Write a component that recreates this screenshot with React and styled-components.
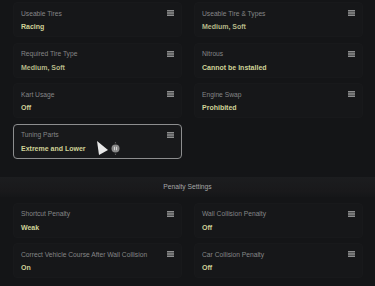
import React from "react";
import styled, { createGlobalStyle } from "styled-components";

const Global = createGlobalStyle`
  html, body { margin: 0; padding: 0; background: #141517; }
  body { font-family: "Liberation Sans", Arial, sans-serif; }
`;

const Page = styled.div`
  width: 375px;
  height: 286px;
  overflow: hidden;
  background: #141517;
  position: relative;
`;

const Grid = styled.div`
  display: grid;
  grid-template-columns: 169px 169px;
  column-gap: 12px;
  row-gap: 5.5px;
  padding: ${(p) => p.$pad};
`;

const Card = styled.div`
  position: relative;
  box-sizing: border-box;
  height: 35px;
  padding: 6px 7px 0 7px;
  border-radius: 4px;
  background: ${(p) => (p.$active ? "#18191b" : "#161719")};
  border: ${(p) => (p.$active ? "1.5px solid #8d8e8f" : "1px solid #18191b")};
  display: flex;
  flex-direction: column;
  gap: 5px;
`;

const Head = styled.div`
  display: flex;
  justify-content: space-between;
  align-items: center;
  height: 8px;
`;

const Label = styled.span`
  font-size: 6.7px;
  color: #858687;
  white-space: nowrap;
`;

const Value = styled.span`
  font-size: 7px;
  font-weight: bold;
  color: ${(p) => (p.$dim ? "#b5b888" : "#d0d398")};
  white-space: nowrap;
  line-height: 10px;
`;

const Band = styled.div`
  margin-top: 18px;
  height: 20px;
  display: flex;
  align-items: center;
  justify-content: center;
  background: linear-gradient(#1c1d1f, #19191b 70%, #151618);
  font-size: 6.7px;
  color: #a5a6a7;
`;

const Cursor = styled.svg`
  position: absolute;
  left: 96px;
  top: 140px;
`;

const MenuIcon = () => (
  <svg width="7" height="6" viewBox="0 0 7 6">
    <rect x="0" y="0" width="7" height="1.2" fill="#8e8f90" />
    <rect x="0" y="1.6" width="7" height="1.2" fill="#8e8f90" />
    <rect x="0" y="3.2" width="7" height="1.2" fill="#8e8f90" />
    <rect x="0" y="4.8" width="7" height="1.2" fill="#8e8f90" />
  </svg>
);

const Item = ({ label, value, active, dim }) => (
  <Card $active={active}>
    <Head>
      <Label>{label}</Label>
      <MenuIcon />
    </Head>
    <Value $dim={dim}>{value}</Value>
  </Card>
);

export default function App() {
  return (
    <Page>
      <Global />
      <Grid $pad="2px 12px 0 13px">
        <Item label="Useable Tires" value="Racing" />
        <Item label="Useable Tire & Types" value="Medium, Soft" dim />
        <Item label="Required Tire Type" value="Medium, Soft" dim />
        <Item label="Nitrous" value="Cannot be Installed" />
        <Item label="Kart Usage" value="Off" />
        <Item label="Engine Swap" value="Prohibited" />
        <Item label="Tuning Parts" value="Extreme and Lower" active />
      </Grid>
      <Band>Penalty Settings</Band>
      <Grid $pad="6px 12px 0 13px">
        <Item label="Shortcut Penalty" value="Weak" />
        <Item label="Wall Collision Penalty" value="Off" />
        <Item label="Correct Vehicle Course After Wall Collision" value="On" />
        <Item label="Car Collision Penalty" value="Off" />
      </Grid>
      <Cursor width="28" height="20" viewBox="0 0 28 20">
        <path d="M1 1 L12 10 L3 15 Z" fill="#e8e8e8" />
        <circle cx="19.5" cy="8.5" r="4" fill="#8a8a8a" />
        <rect x="18.1" y="6.8" width="0.9" height="3.4" fill="#dcdcdc" />
        <rect x="20" y="6.8" width="0.9" height="3.4" fill="#dcdcdc" />
        <path d="M18.6 3.2 L19.5 2 L20.4 3.2 Z" fill="#777" />
        <path d="M18.6 13.8 L19.5 15 L20.4 13.8 Z" fill="#777" />
      </Cursor>
    </Page>
  );
}
